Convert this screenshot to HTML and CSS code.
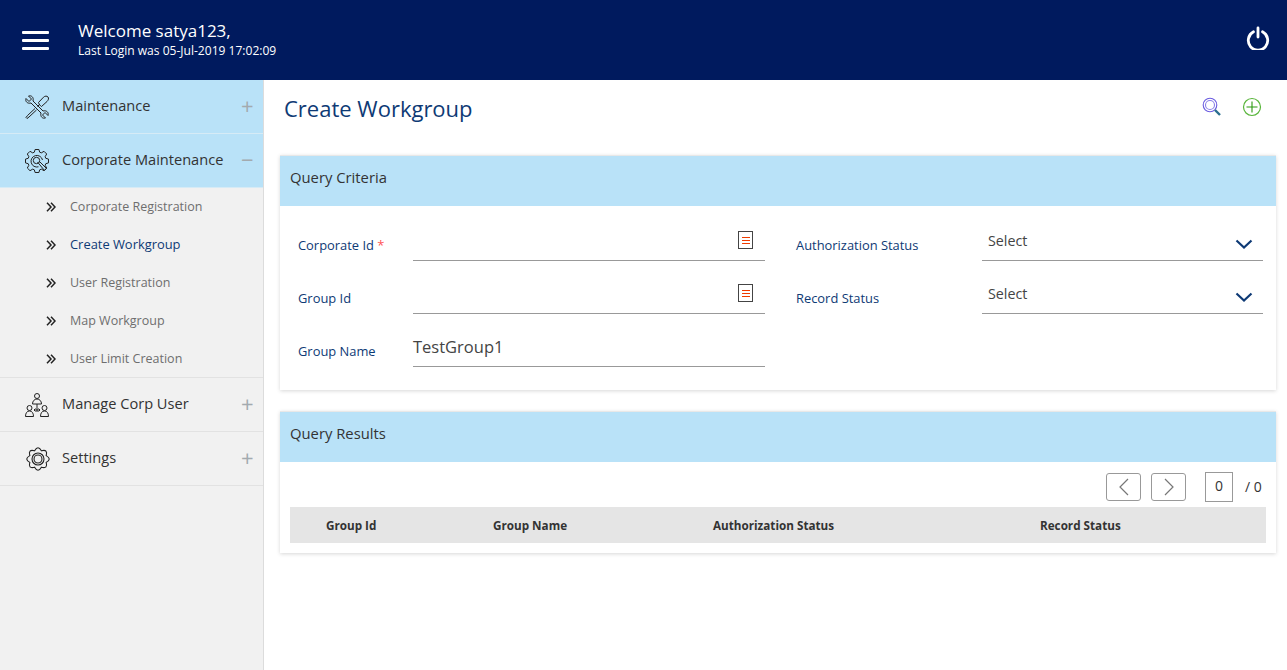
FILE: index.html
```html
<!DOCTYPE html>
<html lang="en">
<head>
<meta charset="utf-8">
<title>Create Workgroup</title>
<link rel="stylesheet" href="styles.css">
</head>
<body>
<svg class="sprite" width="0" height="0" aria-hidden="true"><defs><symbol id="dbl" viewBox="0 0 10 10"><path d="M1 .8 5 5 1 9.200M5 .8 9 5 5 9.200" fill="none" stroke="#222" stroke-width="1.500"/></symbol></defs></svg>
<header class="topbar">
  <div class="burger"><span></span><span></span><span></span></div>
  <div class="welcome">
    <div class="welcome-name">Welcome satya123,</div>
    <div class="welcome-login">Last Login was 05-Jul-2019 17:02:09</div>
  </div>
  <svg class="power" width="24" height="24" viewBox="0 0 24 24" fill="none" stroke="#fff" stroke-width="2.800" stroke-linecap="round"><path d="M7.500 5.800a9.700 9.700 0 1 0 9 0"/><path d="M12 2v9"/></svg>
</header>
<div class="shell">
  <nav class="sidebar">
    <div class="nav-item active">
      <svg class="nav-icon" width="24" height="24" viewBox="0 0 24 24" fill="none" stroke="#222" stroke-width="1" stroke-linejoin="round"><path d="M1 3.500 4 6.500 6.500 4 3.500 1C6.500 0 9 2.500 8 6L18 16C21.500 15 24 17.500 23 20.500L20 17.500 17.500 20 20.500 23C17.500 24 15 21.500 16 18L6 8C2.500 9 0 6.500 1 3.500Z"/><path d="M13.500 7.500 18.500 2.200C20 .8 22 .8 23 2 24 3.200 23.500 5 22 6.500L16.500 11.500C15.500 11 14 9.500 13.500 7.500Z"/><path d="M14.500 9.500 12.500 11.500M10 13.500 2.500 20.500 1 22.500 2 23.500 4 22 11.500 15"/></svg>
      <span class="nav-label">Maintenance</span><span class="sign">+</span>
    </div>
    <div class="nav-item active">
      <svg class="nav-icon" width="24" height="24" viewBox="0 0 24 24" fill="none" stroke="#222" stroke-width="1" stroke-linejoin="round"><path d="M9.300 3.200 10.100.5H13.900L14.700 3.200 16.310 3.870 19 2.310 21.690 5 20.130 7.690 20.800 9.300 23.500 10.100V13.900L20.800 14.700 20.130 16.310 21.690 19 19 21.690 16.310 20.130 14.700 20.800 13.900 23.500H10.100L9.300 20.800 7.690 20.130 5 21.690 2.310 19 3.870 16.310 3.200 14.700.5 13.900V10.100L3.200 9.300 3.870 7.690 2.310 5 5 2.310 7.690 3.870Z"/><path d="M17.500 11a5.800 5.800 0 1 0-4 6.800"/><circle cx="11.500" cy="11.500" r="3.200"/><path d="M12.500 13 19.500 21.500 21.500 19.500 14 12" /></svg>
      <span class="nav-label">Corporate Maintenance</span><span class="sign">−</span>
    </div>
    <ul class="subnav">
      <li><svg class="chev"><use href="#dbl"/></svg>Corporate Registration</li>
      <li class="current"><svg class="chev"><use href="#dbl"/></svg>Create Workgroup</li>
      <li><svg class="chev"><use href="#dbl"/></svg>User Registration</li>
      <li><svg class="chev"><use href="#dbl"/></svg>Map Workgroup</li>
      <li><svg class="chev"><use href="#dbl"/></svg>User Limit Creation</li>
    </ul>
    <div class="nav-item">
      <svg class="nav-icon" width="24" height="24" viewBox="0 0 24 24" fill="none" stroke="#222" stroke-width="1"><circle cx="12" cy="3" r="2.500"/><path d="M7.500 11c0-3 2-5 4.500-5s4.500 2 4.500 5Z"/><circle cx="4.500" cy="15" r="2.500"/><path d="M.5 23.500c0-3.500 1.500-5.500 4-5.500s4 2 4 5.500Z"/><circle cx="19.500" cy="15" r="2.500"/><path d="M15.500 23.500c0-3.500 1.500-5.500 4-5.500s4 2 4 5.500Z"/><path d="M12 11v8M9 17h6M10.500 15.500 9 17l1.500 1.500M13.500 15.500 15 17l-1.500 1.500"/></svg>
      <span class="nav-label">Manage Corp User</span><span class="sign">+</span>
    </div>
    <div class="nav-item">
      <svg class="nav-icon nudge" width="24" height="24" viewBox="0 0 26 26" fill="none" stroke="#222" stroke-width="1.200"><path d="M21.870 9.330Q28.500 13 21.870 16.670Q23.960 23.960 16.670 21.870Q13 28.500 9.330 21.870Q2.040 23.960 4.130 16.670Q-2.500 13 4.130 9.330Q2.040 2.040 9.330 4.130Q13-2.500 16.670 4.130Q23.960 2.040 21.870 9.330Z"/><circle cx="13" cy="13" r="6.500"/><circle cx="13" cy="13" r="4.300"/></svg>
      <span class="nav-label">Settings</span><span class="sign">+</span>
    </div>
  </nav>
  <main class="content">
    <div class="page-head">
      <h1>Create Workgroup</h1>
      <div class="page-tools">
        <svg width="20" height="20" viewBox="0 0 20 20" fill="none"><circle cx="8" cy="8" r="6.800" stroke="#6a5be0" stroke-width="1.100"/><circle cx="8" cy="8" r="4.500" stroke="#8a80e8" stroke-width="1.100"/><path d="m13 13 5 5" stroke="#2a6f8f" stroke-width="2.400"/></svg>
        <svg width="20" height="20" viewBox="0 0 20 20" fill="none"><circle cx="10" cy="10" r="8.500" stroke="#58b53a" stroke-width="1.200"/><path d="M10 4.500v11M4.500 10h11" stroke="#2a9a10" stroke-width="1.100"/></svg>
      </div>
    </div>
    <section class="card">
      <h2 class="card-head">Query Criteria</h2>
      <div class="form-grid">
        <div class="field">
          <label class="field-label">Corporate Id <span class="req">*</span></label>
          <div class="control control-left"><span class="doc"><i></i></span></div>
        </div>
        <div class="field">
          <label class="field-label wide">Authorization Status</label>
          <div class="control control-right"><span class="value select">Select</span><svg class="caret" width="18" height="10" viewBox="0 0 18 10" fill="none" stroke="#0e3a75" stroke-width="2.200"><path d="m1.500 1.500 7.500 7 7.500-7"/></svg></div>
        </div>
        <div class="field">
          <label class="field-label">Group Id</label>
          <div class="control control-left"><span class="doc"><i></i></span></div>
        </div>
        <div class="field">
          <label class="field-label wide">Record Status</label>
          <div class="control control-right"><span class="value select">Select</span><svg class="caret" width="18" height="10" viewBox="0 0 18 10" fill="none" stroke="#0e3a75" stroke-width="2.200"><path d="m1.500 1.500 7.500 7 7.500-7"/></svg></div>
        </div>
        <div class="field">
          <label class="field-label">Group Name</label>
          <div class="control control-left"><span class="value">TestGroup1</span></div>
        </div>
      </div>
    </section>
    <section class="card results">
      <h2 class="card-head">Query Results</h2>
      <div class="pager">
        <button class="page-btn"><svg width="12" height="18" viewBox="0 0 12 18" fill="none" stroke="#777" stroke-width="1.200"><path d="M10 1 2 9l8 8"/></svg></button>
        <button class="page-btn"><svg width="12" height="18" viewBox="0 0 12 18" fill="none" stroke="#777" stroke-width="1.200"><path d="m2 1 8 8-8 8"/></svg></button>
        <span class="page-num">0</span>
        <span class="page-total">/ 0</span>
      </div>
      <div class="table-head">
        <span class="col col-1">Group Id</span>
        <span class="col col-2">Group Name</span>
        <span class="col col-3">Authorization Status</span>
        <span class="col col-4">Record Status</span>
      </div>
    </section>
  </main>
</div>
</body>
</html>
```
FILE: styles.css
```css
* { box-sizing: border-box; }
html, body { margin: 0; height: 100%; overflow: hidden; }
body { font-family: "Open Sans", sans-serif; background: #fff; color: #333; }
.sprite { display: block; height: 0; }

.topbar { height: 80px; background: #001a5e; color: #fff; display: flex; align-items: center; padding: 0 17px 0 22px; }
.burger { width: 27px; display: flex; flex-direction: column; gap: 5px; margin-right: 29px; }
.burger span { height: 3px; background: #fff; border-radius: 1px; }
.welcome { flex: 1; margin-top: -3px; }
.welcome-name { font-size: 17px; line-height: 23px; }
.welcome-login { font-size: 12.050px; line-height: 16px; margin-top: 1px; }
.power { margin-top: -5px; }

.shell { display: flex; height: 590px; }
.sidebar { width: 264px; background: #f1f1f1; border-right: 1px solid #dcdcdc; flex: none; }
.nav-item { height: 54px; display: flex; align-items: center; padding: 0 11px 0 24px; border-bottom: 1px solid #e2e2e2; font-size: 14.600px; color: #333; }
.nav-item.active { background: #b9e2f8; border-bottom-color: #d6ebf6; }
.nav-icon { flex: none; margin: 0 13px 0 1px; }
.nav-icon.nudge { margin: 0 12px 0 2px; }
.nav-label { flex: 1; padding-bottom: 4px; }
.sign { width: 11px; font-size: 22px; line-height: 20px; color: #a3aaaf; text-align: center; font-weight: 400; padding-bottom: 4px; box-sizing: content-box; }
.subnav { list-style: none; margin: 0; padding: 0 0 0 46px; height: 190px; border-bottom: 1px solid #e2e2e2; }
.subnav li { height: 38px; display: flex; align-items: center; padding-bottom: 2px; font-size: 12.500px; color: #6e6e6e; }
.subnav li.current { color: #0e3a75; font-size: 12.900px; }
.chev { width: 10px; height: 10px; margin: 2px 14px 0 0; flex: none; }

.content { flex: 1; min-width: 0; padding: 0 11px 0 16px; }
.page-head { height: 75px; display: flex; align-items: flex-start; justify-content: space-between; }
.page-head h1 { margin: 12px 0 0 4px; font-size: 22px; line-height: 32px; font-weight: 400; color: #0e3a75; }
.page-tools { display: flex; gap: 20px; margin: 17px 14px 0 0; }

.card { background: #fff; border-top: 1px solid #e8e8e8; box-shadow: 0 1px 4px rgba(0,0,0,.16); height: 235px; }
.results { margin-top: 21px; height: 142px; }
.card-head { margin: 0; height: 50px; background: #b9e2f8; padding: 0 10px; font-size: 14.800px; line-height: 43px; font-weight: 400; color: #333; }

.form-grid { display: grid; grid-template-columns: 498px 1fr; grid-auto-rows: 53px; padding: 2px 13px 0 18px; }
.field { display: flex; align-items: flex-end; height: 53px; }
.field-label { width: 115px; flex: none; font-size: 12.900px; line-height: 18px; color: #0e3a75; padding-bottom: 7px; }
.field-label.wide { width: 186px; }
.req { color: #f55; }
.control { height: 53px; border-bottom: 1px solid #999; display: flex; align-items: flex-end; justify-content: space-between; position: relative; }
.control-left { width: 352px; }
.control-right { width: 281px; padding-right: 10px; }
.value { font-size: 16.500px; line-height: 22px; color: #444; padding-bottom: 8px; }
.value.select { font-size: 14.300px; padding: 0 0 8px 6px; }
.caret { margin-bottom: 11px; }
.doc { position: absolute; right: 12px; top: 23px; width: 15px; height: 18px; border: 1px solid #444; display: flex; align-items: center; justify-content: center; }
.doc i { width: 8px; height: 7px; border-top: 1px solid #f03c00; border-bottom: 1px solid #f03c00; background: linear-gradient(#f03c00,#f03c00) center / 100% 1px no-repeat; }

.pager { height: 45px; display: flex; align-items: center; justify-content: flex-end; padding: 4px 15px 0 0; }
.page-btn { width: 35px; height: 28px; padding: 0; margin-right: 10px; background: #fff; border: 1px solid #999; border-radius: 3px; display: flex; align-items: center; justify-content: center; }
.page-btn + .page-btn { margin-right: 19px; }
.page-num { width: 28px; height: 30px; border: 1px solid #999; display: flex; align-items: center; justify-content: center; font-size: 14px; padding-bottom: 2px; color: #333; margin-right: 12px; }
.page-total { width: 16px; font-size: 14px; color: #333; white-space: nowrap; }
.table-head { height: 36px; margin: 0 10px; background: #e5e5e5; display: grid; grid-template-columns: 203px 220px 327px 1fr; align-items: center; font-size: 11.700px; font-weight: 700; color: #333; }
.col-1 { padding-left: 36px; }
```
